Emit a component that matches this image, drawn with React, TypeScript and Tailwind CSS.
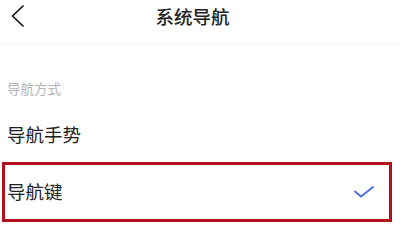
import React from "react";

export default function App() {
  const font = { fontFamily: '"Noto Sans CJK SC", "Noto Sans", sans-serif' };
  return (
    <div className="w-[400px] h-[243px] bg-white overflow-hidden" style={font}>
      <div className="h-[44px] border-b border-[#f2f2f2]">
        <div className="h-[32px] grid grid-cols-[1fr_auto_1fr] items-center">
          <div className="pl-[11px] flex items-center">
            <svg width="14" height="22" viewBox="0 0 14 22" fill="none">
              <polyline points="12,1 1.5,11 12,21" stroke="#111" strokeWidth="1.7" strokeLinecap="round" strokeLinejoin="round" />
            </svg>
          </div>
          <div className="text-[18.5px] leading-[32px] font-medium text-[#222] pr-[15px]">系统导航</div>
          <div />
        </div>
      </div>
      <div className="pt-[34px] px-[7px]">
        <div className="h-[21px] flex items-center text-[13.5px] text-[#b4b4b4]">导航方式</div>
        <div className="h-[30px] mt-[21px] flex items-center text-[18.5px] text-[#222]">导航手势</div>
      </div>
      <div className="mt-[12px] ml-[2px] w-[390px] h-[60px] border-[3px] border-[#b3121c] flex items-center justify-between pl-[2px] pr-[15px]">
        <span className="text-[18.5px] text-[#222]">导航键</span>
        <svg width="20" height="12" viewBox="0 0 20 12" fill="none">
          <polyline points="1,5.5 7,10.5 19,1" stroke="#4a6ee0" strokeWidth="1.9" strokeLinecap="round" strokeLinejoin="round" />
        </svg>
      </div>
    </div>
  );
}
